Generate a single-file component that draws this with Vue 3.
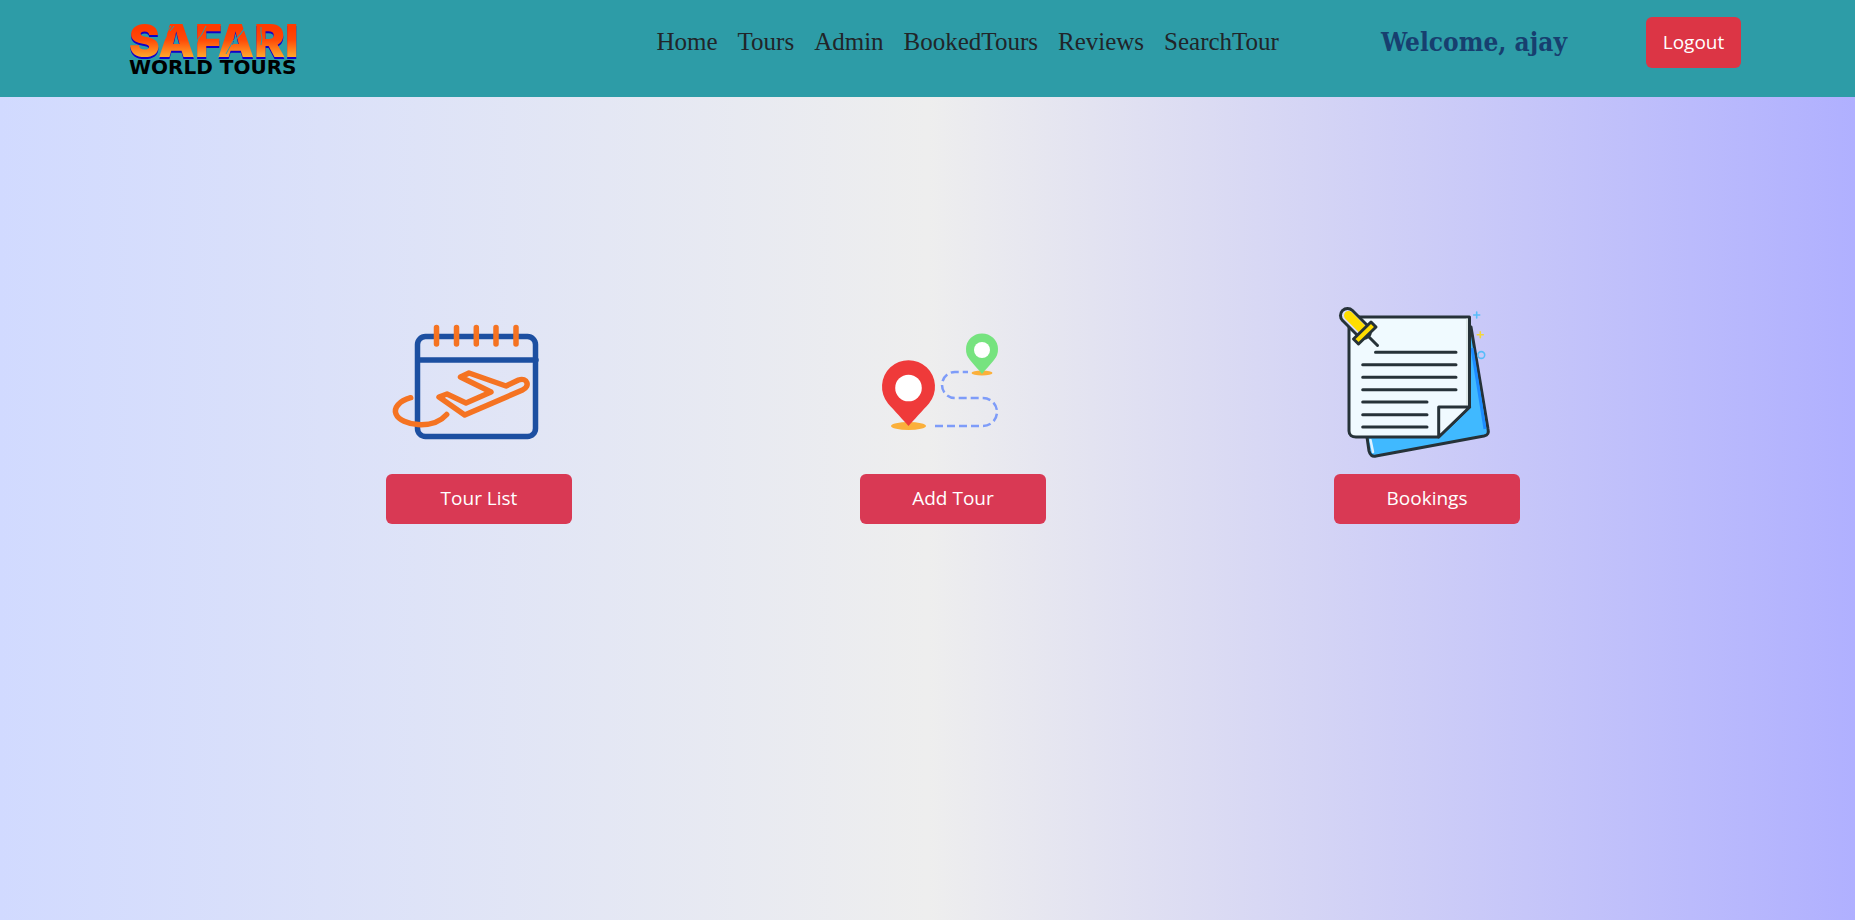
<script setup>
const links = ['Home', 'Tours', 'Admin', 'BookedTours', 'Reviews', 'SearchTour']
</script>

<template>
  <div class="page">
    <header class="bar">
      <a class="logo" href="#" aria-label="Safari World Tours">
        <svg width="176" height="97" viewBox="0 0 176 97">
          <defs>
            <linearGradient id="flame" x1="0" y1="0" x2="0" y2="1">
              <stop offset="0.3" stop-color="#ff3b00" />
              <stop offset="0.5" stop-color="#ff4a08" />
              <stop offset="0.8" stop-color="#ffa62b" />
            </linearGradient>
          </defs>
          <text class="brand" x="1" y="57" fill="url(#flame)">SAFARI</text>
          <path d="M43 26l-4 6-1 5-4 7M46 26l-4 5M78 26l-4 8-4 5-4 12M118 27l-6 8-7 6-7 13M116 29l-12 16M133 27v6l1 5-1 7" fill="none" stroke="#2d9ca7" stroke-width="1" />
          <text class="sub" x="1" y="74">WORLD TOURS</text>
        </svg>
      </a>
      <nav class="nav">
        <a v-for="l in links" :key="l" href="#">{{ l }}</a>
      </nav>
      <h4 class="welcome">Welcome, ajay</h4>
      <button class="logout" type="button">Logout</button>
    </header>

    <main class="cards">
      <section class="card">
        <svg width="170" height="160" viewBox="0 -10 170 160" fill="none" stroke-linecap="round" stroke-linejoin="round">
          <g stroke="#1c4fa1" stroke-width="5.500">
            <rect x="31.500" y="22.500" width="118" height="100" rx="8" />
            <path d="M32 46h118" />
          </g>
          <g stroke="#f57322" stroke-width="5.500">
            <path d="M50.500 13.500v16.500M70.500 13.500v16.500M90.300 13.500v16.500M110 13.500v16.500M130 13.500v16.500" />
            <path d="M74.500 63L83 59l37 13 12.500-6c9-3 12 6.500 4 10L78.700 101 53 83l8-3 19 9 25-11z" />
            <path d="M24.700 83.700C13 87 7.500 94 10 100c5 12 37 16 50.700 0.500" />
          </g>
        </svg>
        <button type="button">Tour List</button>
      </section>
      <section class="card">
        <svg width="170" height="160" viewBox="0 -10 170 160">
          <ellipse cx="48.500" cy="112" rx="17.500" ry="4" fill="#fbb03b" />
          <ellipse cx="122" cy="59" rx="10.500" ry="2.500" fill="#fbb03b" />
          <path d="M75 112h48a14 14 0 0 0 0-28H95a13 13 0 0 1 0-26h13" fill="none" stroke="#7e9cf9" stroke-width="2.500" stroke-dasharray="8 4" />
          <path d="M48.500 112C44 107 34 96 28 89.500a26.500 26.500 0 1 1 41 0C63 96 53 107 48.500 112z" fill="#ef3a3a" />
          <circle cx="48.500" cy="74" r="13.300" fill="#fff" />
          <path d="M122 60c-3-4-8-9-12-14a16 16 0 1 1 24 0c-4 5-9 10-12 14z" fill="#76e37f" />
          <circle cx="122" cy="36" r="8" fill="#fff" />
        </svg>
        <button type="button">Add Tour</button>
      </section>
      <section class="card">
        <svg width="170" height="160" viewBox="0 -6 170 160" fill="none" stroke-linecap="round" stroke-linejoin="round">
          <path d="M33 127l2 14c1 4 3 6 7 5l108-20c4-1 5-3 4-7L137 17 120 30z" fill="#40b9ff" stroke="#263238" stroke-width="3" />
          <path d="M36.500 130l2.500 12" stroke="#dff1ff" stroke-width="2.500" />
          <path d="M138 38l13 81" stroke="#1e8cff" stroke-width="3" stroke-linecap="butt" />
          <path d="M15 7h120.500v90l-31 30H22c-4 0-7-2-7-6z" fill="#f0faff" stroke="#263238" stroke-width="3" />
          <path d="M133 9.500v85" stroke="#dfe9e9" stroke-width="2" />
          <path d="M104.700 127V97h31z" fill="#f0faff" stroke="#263238" stroke-width="3" />
          <path d="M41.500 42.300H122M28.700 54.700H122M28.700 67.300H122M28.700 79.700H122M28.700 92H93M28.700 104.700H93M28.700 117H93" stroke="#263238" stroke-width="3" />
          <path d="M33 25l10.500 10.500" stroke="#263238" stroke-width="3" />
          <path d="M13.500 5.500l16 16" stroke="#263238" stroke-width="17" />
          <path d="M13.500 5.500l16 16" stroke="#d9dcf8" stroke-width="11" />
          <path d="M14.500 5.500l16 16" stroke="#ffdd00" stroke-width="9" />
          <path d="M37 12l5 5-17.500 17-5-5z" fill="#ffdd00" stroke="#263238" stroke-width="3" />
          <path d="M142.700 2v6M139.700 5h6" stroke="#58bdf9" stroke-width="1.600" />
          <path d="M146.300 21.700v6M143.300 24.700h6" stroke="#f3d73a" stroke-width="1.600" />
          <circle cx="147.300" cy="45" r="3.400" stroke="#58bdf9" stroke-width="1.600" />
        </svg>
        <button type="button">Bookings</button>
      </section>
    </main>
  </div>
</template>

<style>
body { margin: 0; }
</style>

<style scoped>
.page {
  min-height: 100vh;
  background: linear-gradient(90deg, #d1daff 0%, #eeeeee 50%, #b0b0ff 100%);
  font-family: "Open Sans", sans-serif;
}
.bar {
  display: flex;
  align-items: flex-start;
  padding: 0 114px 0 128px;
  background: #2d9ca7;
}
.logo { margin-right: auto; }
.logo svg { display: block; overflow: visible; }
.brand {
  font: 900 46px Inter, sans-serif;
  filter: drop-shadow(0 2px 0 #1200c8);
}
.sub { font: 700 20px "DejaVu Sans", sans-serif; }
.nav { display: flex; gap: 20px; margin: 17px 102px 0 0; }
.nav a {
  font: 25px/50px "Liberation Serif", serif;
  color: #212529;
  text-decoration: none;
}
.welcome {
  margin: 17px 79px 0 0;
  font: 700 26px/50px "DejaVu Serif Condensed", "DejaVu Serif", serif;
  color: #173f6f;
}
.logout, .card button {
  border: 0;
  padding: 0 0 2px;
  border-radius: 6px;
  color: #fff;
  font: 19px/28px "Open Sans", sans-serif;
}
.logout { width: 95px; height: 51px; margin-top: 17px; background: #dc3545; }
.cards {
  display: grid;
  grid-template-columns: repeat(3, 1fr);
  padding: 207px 47px 0 386px;
}
.card { display: flex; flex-direction: column; align-items: flex-start; gap: 10px; }
.card svg { display: block; overflow: visible; }
.card button { width: 186px; height: 50px; background: #d93954; }
</style>
